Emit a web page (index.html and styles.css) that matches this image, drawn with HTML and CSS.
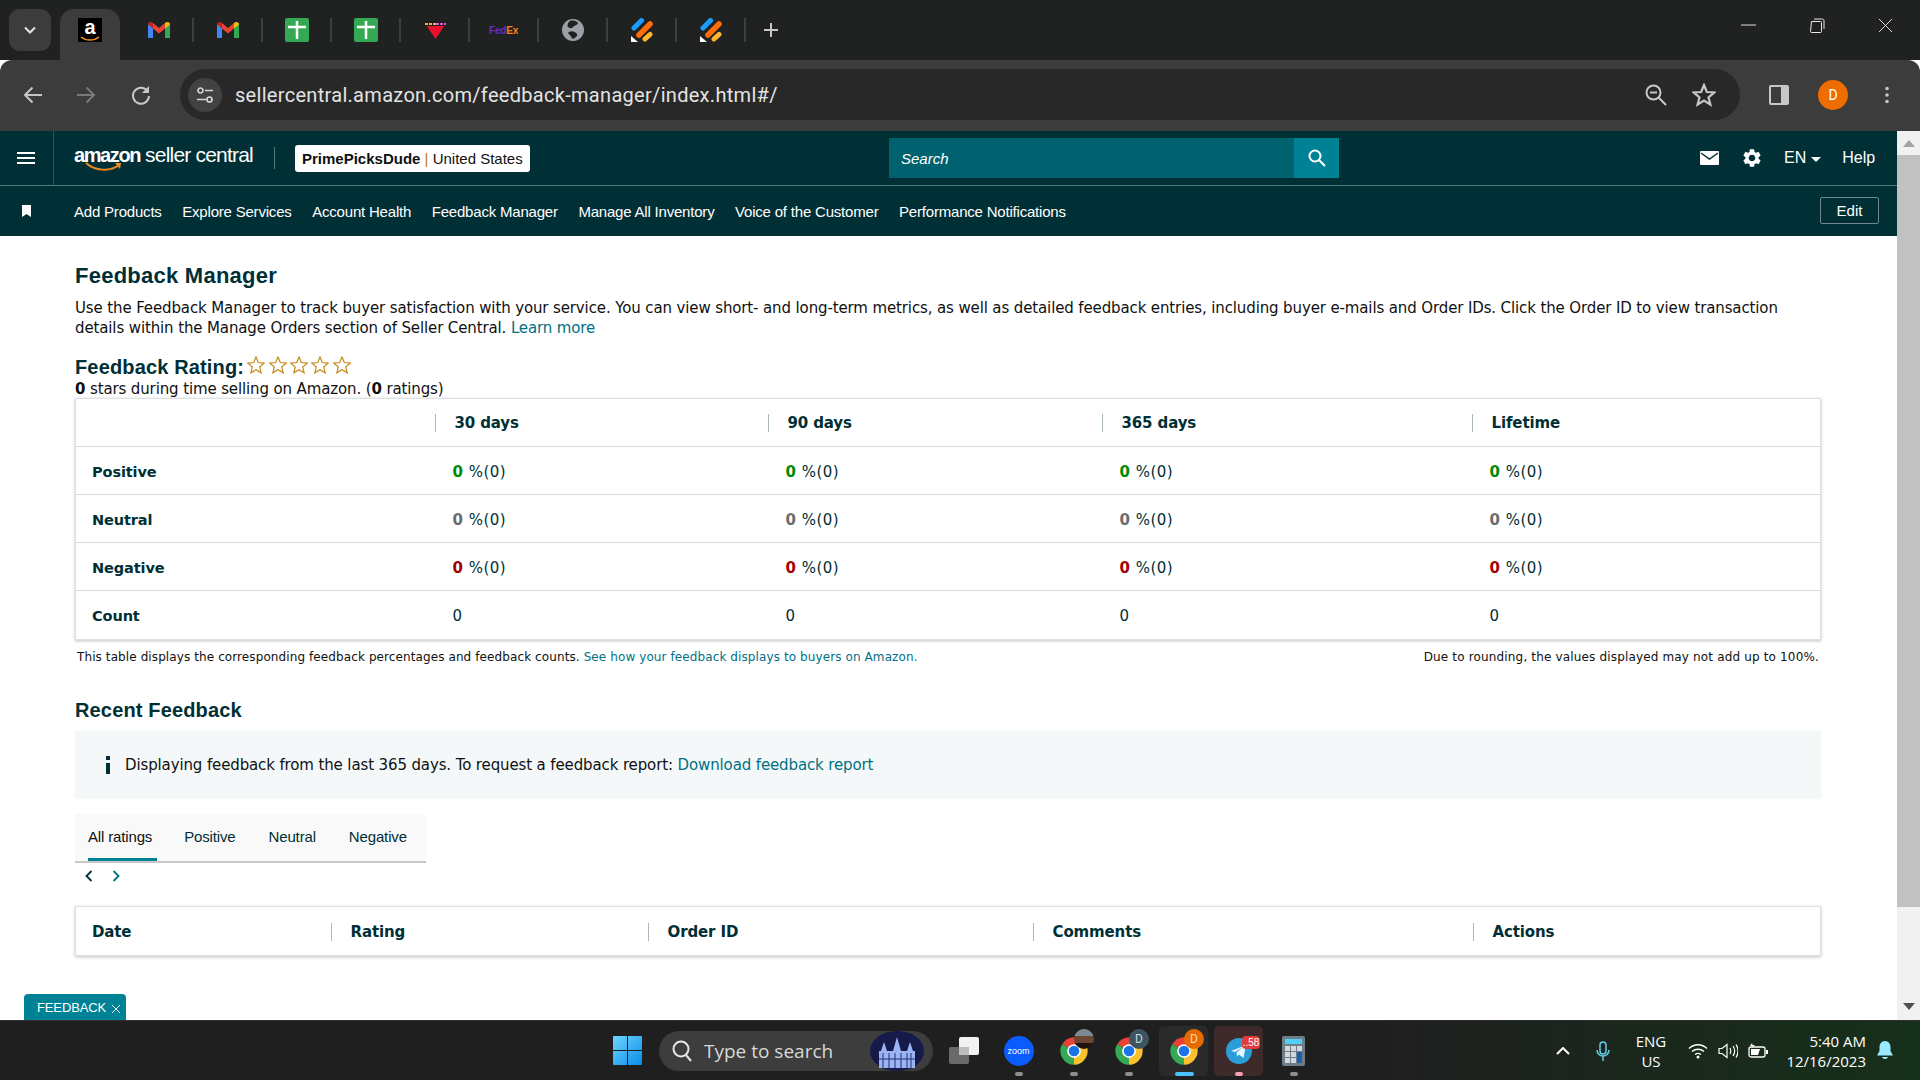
FILE: index.html
```html
<!DOCTYPE html>
<html lang="en">
<head>
    <meta charset="UTF-8">
    <title>Feedback Manager</title>
    <link rel="stylesheet" href="styles.css">
</head>
<body>
<svg class="defs" width="0" height="0">
    <symbol id="gmail" viewBox="0 0 22 16">
        <path fill="#4285f4" d="M0 2v14h5V5z"/>
        <path fill="#34a853" d="M17 5v11h5V2z"/>
        <path fill="#ea4335" d="M5 1l6 5 6-5v5.500l-6 5-6-5z"/>
        <path fill="#c5221f" d="M0 2.500C0 0 3-.800 5 1v5.500L0 2.500z"/>
        <path fill="#fbbc04" d="M22 2.500C22 0 19-.800 17 1v5.500l5-4z"/>
    </symbol>
    <symbol id="sheet" viewBox="0 0 24 24">
        <rect width="24" height="24" rx="2" fill="#34a853"/>
        <path stroke="#fff" stroke-width="2.500" d="M3 9h18M12 3v18"/>
    </symbol>
    <symbol id="bars" viewBox="0 0 22 24">
        <path stroke-linecap="round" stroke-width="5" stroke="#1a9cff" d="M3 10l7.500-7.500"/>
        <path stroke-linecap="round" stroke-width="5.500" stroke="#ff6d0a" d="M8 17L19 6"/>
        <path stroke-linecap="round" stroke-width="5" stroke="#ffb52e" d="M14 21l5-4.500"/>
        <path fill="#fff" d="M0 18l7 6H0z"/>
    </symbol>
    <symbol id="chrome" viewBox="0 0 48 48">
        <path fill="#ea4335" d="M24 24L5 13a22 22 0 0 1 38 0z"/>
        <path fill="#fbc02d" d="M24 24l19-11a22 22 0 0 1-19 33z"/>
        <path fill="#34a853" d="M24 24v22A22 22 0 0 1 5 13z"/>
        <circle cx="24" cy="24" r="11" fill="#fff"/>
        <circle cx="24" cy="24" r="8.500" fill="#1a73e8"/>
    </symbol>
    <symbol id="star" viewBox="0 0 18 18">
        <polygon fill="none" stroke="#c68a1c" stroke-width="1.200" points="9,1 11.300,6.500 17.200,7.100 12.700,11 14.100,16.800 9,13.700 3.900,16.800 5.300,11 .8,7.100 6.700,6.500"/>
    </symbol>
</svg>

<div class="window">
    <div class="tabstrip">
        <div class="tab-search"><svg class="ico-12" viewBox="0 0 12 12"><path fill="none" stroke="#e3e3e3" stroke-width="2" d="M1 3.500l5 5 5-5"/></svg></div>
        <div class="tab-active">
            <div class="fav-amazon">
                <span>a</span>
                <svg viewBox="0 0 24 6"><path fill="none" stroke="#f08a1d" stroke-width="1.600" d="M3 1c5 4 13 4 18 0"/></svg>
            </div>
        </div>
        <div class="tab"><svg class="fav-gmail"><use href="#gmail"/></svg></div>
        <div class="tab"><svg class="fav-gmail"><use href="#gmail"/></svg></div>
        <div class="tab"><svg class="fav"><use href="#sheet"/></svg></div>
        <div class="tab"><svg class="fav"><use href="#sheet"/></svg></div>
        <div class="tab">
            <svg class="fav" viewBox="0 0 24 24">
                <path fill="#e8112d" d="M3 7h19l-9.500 14z"/>
                <path fill="#1d1d1d" d="M2 3h20l1 5H1z"/>
                <path stroke="#e7b93c" stroke-width="2" stroke-dasharray="3 1" d="M2 6h11"/>
                <path stroke="#d35fd0" stroke-width="2" stroke-dasharray="3 1" d="M13 6h10"/>
            </svg>
        </div>
        <div class="tab"><div class="fav-fedex"><b>Fed</b><i>Ex</i></div></div>
        <div class="tab">
            <svg class="fav" viewBox="0 0 24 24">
                <circle cx="12" cy="12" r="11" fill="#9aa0a6"/>
                <path fill="#202221" d="M9 3c3-1 7 0 8 2-1 3-4 2-5 4s-4 1-5 0 0-5 2-6zM8 14c3-2 7 0 8 2s-2 4-4 5c-2-1-2-3-3-4s-3-2-1-3z"/>
            </svg>
        </div>
        <div class="tab"><svg class="fav"><use href="#bars"/></svg></div>
        <div class="tab"><svg class="fav"><use href="#bars"/></svg></div>
        <svg class="new-tab" viewBox="0 0 16 16"><path stroke="#c7c7c7" stroke-width="2" d="M8 1v14M1 8h14"/></svg>
        <div class="win-controls">
            <svg class="win-min" viewBox="0 0 16 2"><path stroke="#e8e8e8" d="M0 1h16"/></svg>
            <svg class="win-max" viewBox="0 0 16 16"><path fill="none" stroke="#e8e8e8" d="M2.500 4.500h9a1 1 0 0 1 1 1v9a1 1 0 0 1-1 1h-9a1 1 0 0 1-1-1z M5 2h7.500A2 2 0 0 1 15 4v8"/></svg>
            <svg class="win-close" viewBox="0 0 16 16"><path stroke="#e8e8e8" d="M1 1l14 14M15 1L1 15"/></svg>
        </div>
    </div>

    <div class="toolbar">
        <svg class="tb-back" viewBox="0 0 20 18"><path fill="none" stroke="#c7c7c7" stroke-width="2" d="M19 9H2M9.500 1.500L2 9l7.500 7.500"/></svg>
        <svg class="tb-forward" viewBox="0 0 20 18"><path fill="none" stroke="#7a7a7a" stroke-width="2" d="M1 9h17M10.500 1.500L18 9l-7.500 7.500"/></svg>
        <svg class="tb-reload" viewBox="0 0 20 20"><path fill="none" stroke="#c7c7c7" stroke-width="2" d="M16.500 6A8 8 0 1 0 18 11"/><path fill="#c7c7c7" d="M18 1v7h-7z"/></svg>
        <div class="omnibox">
            <div class="site-info">
                <svg class="ico-18" viewBox="0 0 18 18"><g fill="none" stroke="#d5d5d5" stroke-width="1.700"><circle cx="4.500" cy="4.500" r="2.500"/><circle cx="13.500" cy="13.500" r="2.500"/><path d="M9 4.500h8M1 13.500h9"/></g></svg>
            </div>
            <span class="url">sellercentral.amazon.com/feedback-manager/index.html#/</span>
            <svg class="omni-zoom" viewBox="0 0 22 22"><g fill="none" stroke="#c7c7c7" stroke-width="2"><circle cx="8.500" cy="8.500" r="7"/><path d="M13.500 13.500L21 21M5 8.500h7"/></g></svg>
            <svg class="omni-star" viewBox="0 0 24 24"><polygon fill="none" stroke="#c7c7c7" stroke-width="2.200" points="12,2 14.800,9 22.300,9.500 16.500,14.300 18.400,21.600 12,17.600 5.600,21.600 7.500,14.300 1.700,9.500 9.200,9"/></svg>
        </div>
        <svg class="tb-panel" viewBox="0 0 22 22"><rect x="1" y="1" width="20" height="20" rx="2" fill="#c7c7c7"/><rect x="3" y="3" width="10" height="16" fill="#3c3c3c"/></svg>
        <div class="profile">D</div>
        <svg class="tb-menu" viewBox="0 0 4 18"><g fill="#c7c7c7"><circle cx="2" cy="2.500" r="1.800"/><circle cx="2" cy="9" r="1.800"/><circle cx="2" cy="15.500" r="1.800"/></g></svg>
    </div>

    <div class="viewport">
        <div class="page">
            <header>
                <div class="topbar">
                    <div class="burger"><span></span><span></span><span></span></div>
                    <div class="logo">
                        <div class="logo-text"><b>amazon</b> seller central</div>
                        <svg class="logo-smile" viewBox="0 0 36 10"><path fill="none" stroke="#f08a1d" stroke-width="2" d="M1 1c9 8 24 9 33 2"/><path fill="#f08a1d" d="M30 1l6 0-1 6z"/></svg>
                    </div>
                    <div class="account"><b>PrimePicksDude</b> <em>|</em> United States</div>
                    <div class="search">
                        <span class="search-text">Search</span>
                        <div class="search-btn"><svg class="ico-18" viewBox="0 0 18 18"><g fill="none" stroke="#fff" stroke-width="2"><circle cx="7" cy="7" r="5.500"/><path d="M11 11l6 6"/></g></svg></div>
                    </div>
                    <div class="top-links">
                        <svg class="ico-mail" viewBox="0 0 19 14"><rect width="19" height="14" rx="1" fill="#fff"/><path fill="none" stroke="#002f36" stroke-width="1.500" d="M1 2l8.500 6L18 2"/></svg>
                        <svg class="ico-gear" viewBox="0 0 24 24"><path fill="#fff" d="M19.140 12.940c.04-.3.06-.61.06-.94 0-.32-.02-.64-.07-.94l2.030-1.580a.49.49 0 0 0 .12-.61l-1.920-3.320a.488.488 0 0 0-.59-.22l-2.390.96c-.5-.38-1.030-.7-1.620-.94l-.36-2.540a.484.484 0 0 0-.48-.41h-3.840c-.24 0-.43.17-.47.41l-.36 2.540c-.59.24-1.130.57-1.620.94l-2.390-.96c-.22-.08-.47 0-.59.22L2.740 8.870c-.12.21-.08.47.12.61l2.030 1.580c-.05.3-.09.63-.09.94s.02.64.07.94l-2.030 1.580a.49.49 0 0 0-.12.61l1.920 3.320c.12.22.37.29.59.22l2.390-.96c.5.38 1.030.7 1.620.94l.36 2.540c.05.24.24.41.48.41h3.840c.24 0 .44-.17.47-.41l.36-2.540c.59-.24 1.130-.56 1.620-.94l2.390.96c.22.08.47 0 .59-.22l1.920-3.320c.12-.22.07-.47-.12-.61l-2.010-1.580zM12 15.600c-1.980 0-3.600-1.620-3.600-3.600s1.620-3.600 3.600-3.600 3.600 1.620 3.600 3.600-1.620 3.600-3.600 3.600z"/></svg>
                        <span class="lang">EN</span>
                        <span class="caret"></span>
                        <span class="help">Help</span>
                    </div>
                </div>
                <nav class="navbar">
                    <svg class="ico-bookmark" viewBox="0 0 9 12"><path fill="#fff" d="M0 0h9v12L4.500 9 0 12z"/></svg>
                    <ul>
                        <li>Add Products</li>
                        <li>Explore Services</li>
                        <li>Account Health</li>
                        <li>Feedback Manager</li>
                        <li>Manage All Inventory</li>
                        <li>Voice of the Customer</li>
                        <li>Performance Notifications</li>
                    </ul>
                    <button class="edit-btn">Edit</button>
                </nav>
            </header>

            <section class="content">
                <h1>Feedback Manager</h1>
                <p class="intro">Use the Feedback Manager to track buyer satisfaction with your service. You can view short- and long-term metrics, as well as detailed feedback entries, including buyer e-mails and Order IDs. Click the Order ID to view transaction details within the Manage Orders section of Seller Central. <a href="#">Learn more</a></p>

                <div class="rating-row">
                    <h2>Feedback Rating:</h2>
                    <div class="stars">
                        <svg><use href="#star"/></svg><svg><use href="#star"/></svg><svg><use href="#star"/></svg><svg><use href="#star"/></svg><svg><use href="#star"/></svg>
                    </div>
                </div>
                <p class="rating-note"><b>0</b> stars during time selling on Amazon. (<b>0</b> ratings)</p>

                <table class="grid">
                    <colgroup><col class="c-name"><col class="c-30"><col class="c-90"><col class="c-365"><col></colgroup>
                    <tr>
                        <th></th>
                        <th><span>30 days</span></th>
                        <th><span>90 days</span></th>
                        <th><span>365 days</span></th>
                        <th><span>Lifetime</span></th>
                    </tr>
                    <tr>
                        <td class="row-name">Positive</td>
                        <td><b class="pos">0</b> %(0)</td>
                        <td><b class="pos">0</b> %(0)</td>
                        <td><b class="pos">0</b> %(0)</td>
                        <td><b class="pos">0</b> %(0)</td>
                    </tr>
                    <tr>
                        <td class="row-name">Neutral</td>
                        <td><b class="neu">0</b> %(0)</td>
                        <td><b class="neu">0</b> %(0)</td>
                        <td><b class="neu">0</b> %(0)</td>
                        <td><b class="neu">0</b> %(0)</td>
                    </tr>
                    <tr>
                        <td class="row-name">Negative</td>
                        <td><b class="neg">0</b> %(0)</td>
                        <td><b class="neg">0</b> %(0)</td>
                        <td><b class="neg">0</b> %(0)</td>
                        <td><b class="neg">0</b> %(0)</td>
                    </tr>
                    <tr class="row-last">
                        <td class="row-name">Count</td>
                        <td>0</td>
                        <td>0</td>
                        <td>0</td>
                        <td>0</td>
                    </tr>
                </table>
                <div class="footnote">
                    <span>This table displays the corresponding feedback percentages and feedback counts. <a href="#">See how your feedback displays to buyers on Amazon.</a></span>
                    <span class="footnote-right">Due to rounding, the values displayed may not add up to 100%.</span>
                </div>

                <h2 class="recent-title">Recent Feedback</h2>
                <div class="info-box">
                    <span class="info-i"></span>
                    <span>Displaying feedback from the last 365 days. To request a feedback report: <a href="#">Download feedback report</a></span>
                </div>

                <div class="filter-tabs">
                    <div class="filter active">All ratings</div>
                    <div class="filter">Positive</div>
                    <div class="filter">Neutral</div>
                    <div class="filter">Negative</div>
                </div>
                <div class="pager">
                    <svg viewBox="0 0 8 12"><path fill="none" stroke="#002f36" stroke-width="1.800" d="M6.500 1L1.500 6l5 5"/></svg>
                    <svg viewBox="0 0 8 12"><path fill="none" stroke="#007185" stroke-width="1.800" d="M1.500 1l5 5-5 5"/></svg>
                </div>

                <table class="grid grid-recent">
                    <colgroup><col class="c-date"><col class="c-rating"><col class="c-order"><col class="c-comments"><col></colgroup>
                    <tr>
                        <th class="first">Date</th>
                        <th><span>Rating</span></th>
                        <th><span>Order ID</span></th>
                        <th><span>Comments</span></th>
                        <th><span>Actions</span></th>
                    </tr>
                </table>
            </section>

            <div class="feedback-tab">FEEDBACK <svg viewBox="0 0 10 10"><path stroke="#fff" d="M1 1l8 8M9 1L1 9"/></svg></div>
        </div>
        <div class="scrollbar">
            <div class="sb-up"></div>
            <div class="sb-thumb"></div>
            <div class="sb-down"></div>
        </div>
    </div>

    <div class="taskbar">
        <svg class="win-logo" viewBox="0 0 29 29">
            <defs><linearGradient id="winblue" x1="0" y1="0" x2="1" y2="1"><stop offset="0" stop-color="#6fd6ff"/><stop offset="1" stop-color="#0a8be6"/></linearGradient></defs>
            <path fill="url(#winblue)" d="M0 1a1 1 0 0 1 1-1h13v14H0zM15 0h13a1 1 0 0 1 1 1v13H15zM0 15h14v14H1a1 1 0 0 1-1-1zM15 15h14v13a1 1 0 0 1-1 1H15z"/>
        </svg>
        <div class="task-search">
            <svg class="ico-20" viewBox="0 0 20 22"><g fill="none" stroke="#e6e6e6" stroke-width="2"><circle cx="9" cy="9" r="7.500"/><path d="M14 15l5 6"/></g></svg>
            <span>Type to search</span>
            <svg class="search-art" viewBox="0 0 56 40">
                <ellipse cx="28" cy="20" rx="27" ry="20" fill="#141a4a"/>
                <g fill="#9db4f2"><path d="M10 37V20h36v17zM24 20l4-14 4 14zM12 20l3-9 3 9zM38 20l3-9 3 9z"/></g>
                <g stroke="#20307e"><path d="M14 22v15M20 22v15M26 22v15M32 22v15M38 22v15M42 22v15M10 28h36"/></g>
            </svg>
        </div>
        <div class="apps">
            <div class="app dotless">
                <svg class="ico-taskview" viewBox="0 0 30 27"><rect y="10" width="20" height="17" rx="2" fill="#6a6a6a"/><rect x="10" width="20" height="18" rx="2" fill="#f2f2f2"/><rect x="10" y="10" width="10" height="8" fill="#bdbdbd"/></svg>
            </div>
            <div class="app">
                <div class="zoom-app">zoom</div>
                <span class="dot"></span>
            </div>
            <div class="app">
                <svg class="ico-chrome"><use href="#chrome"/></svg>
                <span class="ava ava-photo"></span>
                <span class="dot"></span>
            </div>
            <div class="app">
                <svg class="ico-chrome"><use href="#chrome"/></svg>
                <span class="ava ava-slate">D</span>
                <span class="dot"></span>
            </div>
            <div class="app app-active">
                <svg class="ico-chrome"><use href="#chrome"/></svg>
                <span class="ava ava-orange">D</span>
                <span class="dot dot-blue"></span>
            </div>
            <div class="app app-alert">
                <svg class="ico-tg" viewBox="0 0 26 26"><circle cx="13" cy="13" r="13" fill="#2a9ed8"/><path fill="#e9f6fc" d="M5 13l15-6-2.500 13-4.500-3.500-2 2-.5-4 6-5.500-7.500 5z"/></svg>
                <span class="tg-badge">..58</span>
                <span class="dot dot-pink"></span>
            </div>
            <div class="app">
                <svg class="ico-calc" viewBox="0 0 23 30">
                    <rect width="23" height="30" rx="2" fill="#6f7d88"/>
                    <rect x="3" y="3" width="17" height="5" fill="#4fd0f5"/>
                    <g fill="#d3d8dc"><rect x="3" y="10" width="5" height="5"/><rect x="9" y="10" width="5" height="5"/><rect x="15" y="10" width="5" height="5"/><rect x="3" y="16" width="5" height="5"/><rect x="9" y="16" width="5" height="5"/><rect x="3" y="22" width="5" height="5"/><rect x="9" y="22" width="5" height="5"/></g>
                    <rect x="15" y="16" width="5" height="11" fill="#1d5fa8"/>
                </svg>
                <span class="dot"></span>
            </div>
        </div>
        <div class="tray">
            <svg class="tray-chev" viewBox="0 0 14 8"><path fill="none" stroke="#fff" stroke-width="2" d="M1 7l6-6 6 6"/></svg>
            <svg class="tray-mic" viewBox="0 0 14 20"><g fill="none" stroke="#62d0ea" stroke-width="1.500"><rect x="4" y="1" width="6" height="12" rx="3"/><path d="M1 9a6 6 0 0 0 12 0M7 15v5"/></g></svg>
            <div class="tray-lang">ENG<br>US</div>
            <svg class="tray-ico" viewBox="0 0 20 16"><g fill="none" stroke="#fff" stroke-width="1.300"><path d="M1 5.500c5-5 13-5 18 0M4 8.500c3.500-3 8.500-3 12 0M7 11.500c2-1.500 4-1.500 6 0"/></g><circle cx="10" cy="14" r="1.500" fill="#fff"/></svg>
            <svg class="tray-ico" viewBox="0 0 20 16"><g fill="none" stroke="#fff" stroke-width="1.200"><path d="M1 5.500h3L9 1.500v13L4 10.500H1z"/><path d="M12 5c1 2 1 4 0 6M15 3c2 3 2 7 0 10M18 1.500c2.500 4 2.500 9 0 13"/></g></svg>
            <svg class="tray-ico" viewBox="0 0 20 16"><rect x="1" y="4" width="16" height="10" rx="2" fill="none" stroke="#fff" stroke-width="1.300"/><path fill="#fff" d="M3 6h9l-2 6H3zM18 7h2v4h-2zM4 0l-2 3h3L3 6l4-4H4.500z"/></svg>
            <div class="clock">5:40 AM<br>12/16/2023</div>
            <svg class="tray-bell" viewBox="0 0 16 20"><path fill="#99ecff" d="M8 0c3.500 0 5.500 3 5.500 6v4l2.500 4.500H0L2.500 10V6C2.500 3 4.500 0 8 0zM5 16h6c-.5 2.500-5.500 2.500-6 0z"/></svg>
        </div>
    </div>
</div>
</body>
</html>
```
FILE: styles.css
```css
* {
    box-sizing: border-box;
}
body {
    margin: 0;
    font-family: "DejaVu Sans", sans-serif;
    font-size: 15px;
    letter-spacing: -.125px;
    color: #0f1111;
    background: #fff;
}
.defs {
    display: block;
    height: 0;
}
a {
    color: #007185;
    text-decoration: none;
}
.window {
    width: 1920px;
    height: 1080px;
    display: flex;
    flex-direction: column;
    overflow: hidden;
}
.ico-12 { width: 12px; height: 12px; }
.ico-18 { width: 18px; height: 18px; }
.ico-20 { width: 20px; height: 22px; flex: none; }

/* browser tabs */
.tabstrip {
    height: 60px;
    background: #202221;
    display: flex;
    align-items: flex-end;
    flex: none;
}
.tab-search {
    width: 42px;
    height: 42px;
    margin: 0 9px 9px;
    border-radius: 11px;
    background: #3c3c3c;
    display: flex;
    align-items: center;
    justify-content: center;
}
.tab-active {
    width: 60px;
    height: 51px;
    margin-right: 5px;
    border-radius: 14px 14px 0 0;
    background: #3c3c3c;
    display: flex;
    justify-content: center;
    padding-top: 9px;
}
.fav-amazon {
    width: 24px;
    height: 24px;
    background: #000;
    color: #fff;
    font: bold 20px/18px "Liberation Sans", sans-serif;
    letter-spacing: 0;
    text-align: center;
}
.fav-amazon span {
    display: block;
    height: 18px;
}
.fav-amazon svg {
    display: block;
    width: 24px;
    height: 6px;
}
.tab {
    width: 69px;
    height: 24px;
    margin-bottom: 18px;
    border-right: 2px solid #3e3f3f;
    display: flex;
    align-items: center;
    justify-content: center;
}
.fav { width: 24px; height: 24px; }
.fav-gmail { width: 22px; height: 16px; }
.fav-fedex {
    font: bold 10px "Liberation Sans", sans-serif;
    letter-spacing: -.2px;
}
.fav-fedex b { color: #6a2cc0; }
.fav-fedex i { color: #f5821f; font-style: normal; }
.new-tab {
    width: 16px;
    height: 16px;
    margin: 0 0 22px 17px;
}
.win-controls {
    margin-left: auto;
    height: 60px;
    display: flex;
    align-items: center;
    padding: 0 27px 10px 0;
}
.win-min { width: 15px; height: 2px; }
.win-max { width: 16px; height: 16px; margin-left: 53px; }
.win-close { width: 15px; height: 15px; margin-left: 53px; }

/* browser toolbar */
.toolbar {
    height: 71px;
    flex: none;
    background: #3c3c3c;
    border-radius: 12px 12px 0 0;
    display: flex;
    align-items: center;
    padding-bottom: 2px;
    position: relative;
}
.tb-back { width: 20px; height: 18px; margin-left: 23px; flex: none; }
.tb-forward { width: 20px; height: 18px; margin-left: 33px; flex: none; }
.tb-reload { width: 20px; height: 20px; margin-left: 35px; flex: none; }
.omnibox {
    width: 1560px;
    height: 51px;
    margin-left: 29px;
    border-radius: 26px;
    background: #282828;
    display: flex;
    align-items: center;
    padding-left: 8px;
    flex: none;
}
.site-info {
    width: 34px;
    height: 34px;
    border-radius: 50%;
    background: #424242;
    display: flex;
    align-items: center;
    justify-content: center;
    flex: none;
}
.url {
    margin-left: 13px;
    font: 20px Roboto, sans-serif;
    letter-spacing: .3px;
    color: #e3e3e3;
}
.omni-zoom { width: 22px; height: 22px; margin-left: auto; }
.omni-star { width: 24px; height: 24px; margin: 0 24px 0 25px; }
.tb-panel { width: 22px; height: 22px; margin-left: 28px; flex: none; }
.profile {
    width: 30px;
    height: 30px;
    margin-left: 28px;
    border-radius: 50%;
    background: #ef6c00;
    color: #fff;
    font: 14px/30px Roboto, sans-serif;
    text-align: center;
    flex: none;
}
.tb-menu { width: 4px; height: 18px; margin-left: 37px; flex: none; }

/* page + scrollbar */
.viewport {
    height: 889px;
    flex: none;
    display: flex;
}
.page {
    flex: 1;
    position: relative;
    overflow: hidden;
}
.scrollbar {
    width: 23px;
    background: #f1f1f1;
    display: flex;
    flex-direction: column;
    align-items: center;
}
.sb-up, .sb-down {
    width: 0;
    height: 0;
    border-left: 6px solid transparent;
    border-right: 6px solid transparent;
}
.sb-up {
    border-bottom: 7px solid #a3a3a3;
    margin: 9px 0 8px;
}
.sb-down {
    border-top: 7px solid #505050;
    margin-top: 96px;
}
.sb-thumb {
    width: 100%;
    height: 752px;
    background: #c1c1c1;
}

/* seller central header */
header {
    background: #002f36;
    color: #fff;
    font-family: "Liberation Sans", sans-serif;
    letter-spacing: 0;
}
.topbar {
    height: 55px;
    border-bottom: 1px solid #54777c;
    display: flex;
    align-items: center;
}
.burger {
    width: 54px;
    height: 54px;
    border-right: 1px solid #2f5257;
    display: flex;
    flex-direction: column;
    justify-content: center;
    gap: 3px;
    padding-left: 17px;
    flex: none;
}
.burger span {
    display: block;
    width: 18px;
    height: 2px;
    background: #fff;
}
.logo {
    margin-left: 20px;
    width: 200px;
    height: 36px;
    position: relative;
    flex: none;
}
.logo-text {
    margin-top: 2px;
    font-size: 21px;
    line-height: 26px;
    letter-spacing: -.8px;
    white-space: nowrap;
}
.logo-text b {
    font-size: 20px;
    letter-spacing: -1.400px;
}
.logo-smile {
    position: absolute;
    left: 11px;
    top: 22px;
    width: 36px;
    height: 10px;
}
.account {
    margin-left: 21px;
    padding-left: 7px;
    width: 235px;
    height: 27px;
    background: #fff;
    border-radius: 3px;
    color: #0f1111;
    font-size: 15px;
    line-height: 27px;
    white-space: nowrap;
    flex: none;
    position: relative;
}
.account::before {
    content: "";
    position: absolute;
    left: -21px;
    top: 2px;
    width: 1px;
    height: 22px;
    background: #54777c;
}
.account em {
    font-style: normal;
    color: #c9780a;
}
.search {
    margin-left: 359px;
    width: 450px;
    height: 40px;
    background: #00616f;
    display: flex;
    align-items: center;
    flex: none;
}
.search-text {
    flex: 1;
    padding-left: 12px;
    font-size: 15px;
    font-style: italic;
}
.search-btn {
    width: 45px;
    height: 40px;
    background: #008296;
    display: flex;
    align-items: center;
    justify-content: center;
}
.top-links {
    display: flex;
    align-items: center;
    margin-left: 361px;
}
.ico-mail { width: 19px; height: 14px; }
.ico-gear { width: 22px; height: 22px; margin-left: 22px; }
.lang { margin-left: 21px; font-size: 16px; }
.caret {
    margin-left: 5px;
    margin-top: 2px;
    border-left: 5px solid transparent;
    border-right: 5px solid transparent;
    border-top: 5px solid #fff;
}
.help { margin-left: 21px; font-size: 16px; }
.navbar {
    height: 50px;
    display: flex;
    align-items: center;
}
.ico-bookmark {
    width: 9px;
    height: 12px;
    margin: 0 0 1px 22px;
    flex: none;
}
.navbar ul {
    list-style: none;
    margin: 1px 0 0 43px;
    padding: 0;
    display: flex;
    gap: 20.600px;
    font-size: 15px;
    letter-spacing: -.2px;
}
.edit-btn {
    margin: 0 18px 2px auto;
    width: 59px;
    height: 27px;
    background: transparent;
    border: 1px solid #6c8a8e;
    border-radius: 2px;
    color: #fff;
    font: 15px "Liberation Sans", sans-serif;
}

/* feedback content */
.content {
    padding: 26px 76px 0 75px;
}
h1 {
    margin: 0;
    font: bold 22px/28px "Liberation Sans", sans-serif;
    letter-spacing: .25px;
    color: #002f36;
}
.intro {
    margin: 8px 0 0;
    line-height: 20px;
}
.rating-row {
    margin-top: 17px;
    height: 24px;
    display: flex;
    align-items: center;
}
h2 {
    margin: 0;
    font: bold 20px/24px "Liberation Sans", sans-serif;
    letter-spacing: .15px;
    color: #002f36;
}
.stars {
    display: flex;
    margin: 0 0 4px 3px;
    gap: 3.400px;
}
.stars svg {
    width: 18px;
    height: 18px;
}
.rating-note {
    margin: 1px 0 0;
    line-height: 18px;
}
.grid {
    width: 100%;
    table-layout: fixed;
    border-collapse: collapse;
    border: 1px solid #dde1e1;
    box-shadow: 0 1px 3px rgba(0, 0, 0, .25);
    color: #002f36;
}
.c-name { width: 359px; }
.c-30 { width: 333px; }
.c-90 { width: 334px; }
.c-365 { width: 370px; }
.grid th {
    height: 48px;
    padding: 1px 0 0;
    text-align: left;
    font-size: 15px;
    font-weight: bold;
}
.grid th span {
    display: block;
    height: 18px;
    line-height: 18px;
    border-left: 1px solid #aab7b8;
    padding-left: 19px;
}
.grid td {
    height: 48px;
    padding: 2px 0 0 18px;
    border-top: 1px solid #d5dbdb;
    letter-spacing: .5px;
}
.grid .row-last td {
    height: 49px;
}
.grid .row-name {
    font-size: 14.500px;
    font-weight: bold;
    padding-left: 16px;
    letter-spacing: -.1px;
}
.pos { color: #008a00; }
.neu { color: #6c6c6c; }
.neg { color: #a10000; }
.footnote {
    margin-top: 9px;
    padding: 0 2px;
    display: flex;
    justify-content: space-between;
    font-size: 12px;
    letter-spacing: .1px;
    line-height: 16px;
}
.footnote-right {
    letter-spacing: .16px;
}
.recent-title {
    margin-top: 32px;
    line-height: 26px;
}
.info-box {
    margin-top: 8px;
    height: 68px;
    background: #f5f8f9;
    display: flex;
    align-items: center;
    padding-left: 31px;
}
.info-i {
    width: 4px;
    height: 18px;
    margin-right: 15px;
    background: linear-gradient(#002f36 0 4px, transparent 4px 7px, #002f36 7px);
    flex: none;
}
.filter-tabs {
    margin-top: 15px;
    width: 351px;
    height: 49px;
    background: #f9f9f9;
    border-bottom: 2px solid #c9c9c9;
    display: flex;
    padding-left: 13px;
    font: 15px "Liberation Sans", sans-serif;
    letter-spacing: -.15px;
    color: #002f36;
}
.filter {
    height: 47px;
    padding-top: 14px;
    margin-right: 33px;
    white-space: nowrap;
}
.filter.active {
    padding-right: 5px;
    margin-right: 27px;
    border-bottom: 3px solid #008296;
    color: #0f1111;
}
.pager {
    height: 25px;
    display: flex;
    align-items: center;
    padding-left: 10px;
    gap: 19px;
}
.pager svg {
    width: 8px;
    height: 12px;
}
.grid-recent {
    margin-top: 18px;
    height: 50px;
}
.c-date { width: 255px; }
.c-rating { width: 317px; }
.c-order { width: 385px; }
.c-comments { width: 440px; }
.grid-recent .first {
    padding-left: 16px;
}
.feedback-tab {
    position: absolute;
    left: 24px;
    bottom: 0;
    width: 102px;
    height: 26px;
    background: #008296;
    border-radius: 4px 4px 0 0;
    color: #fff;
    font: 13px/27px "Liberation Sans", sans-serif;
    padding-left: 13px;
    white-space: nowrap;
}
.feedback-tab svg {
    width: 10px;
    height: 10px;
    margin-left: 1px;
    vertical-align: -2px;
}

/* windows taskbar */
.taskbar {
    height: 60px;
    flex: none;
    background: linear-gradient(90deg, #1f1f1f 0, #1f1f1f 72%, #16301a 100%);
    border-top: 1px solid #2e2e2e;
    display: flex;
    align-items: center;
    padding-left: 613px;
    color: #fff;
    letter-spacing: 0;
}
.win-logo { width: 29px; height: 29px; flex: none; }
.task-search {
    margin-left: 17px;
    width: 274px;
    height: 40px;
    border-radius: 20px;
    background: #3d3d3d;
    display: flex;
    align-items: center;
    padding-left: 13px;
    font: 19px "Open Sans", sans-serif;
    color: #d8d8d8;
    flex: none;
}
.task-search span {
    margin-left: 12px;
    white-space: nowrap;
}
.search-art {
    width: 56px;
    height: 40px;
    margin-left: auto;
    margin-right: 8px;
}
.apps {
    display: flex;
    margin-left: 3px;
}
.app {
    width: 55px;
    height: 50px;
    display: flex;
    align-items: center;
    justify-content: center;
    position: relative;
}
.app-active {
    background: #2a2a2a;
    border-radius: 5px;
    margin: 0 3px;
    width: 49px;
}
.app-alert {
    background: #3e2a2a;
    border-radius: 5px;
    margin: 0 3px;
    width: 49px;
}
.dot {
    position: absolute;
    left: 50%;
    bottom: 0;
    width: 8px;
    height: 4px;
    margin-left: -4px;
    border-radius: 2px;
    background: #8e8e8e;
}
.dot-blue {
    width: 19px;
    margin-left: -9px;
    background: #4cc2ff;
}
.dot-pink {
    background: #f7a0ac;
}
.ico-taskview { width: 30px; height: 27px; }
.zoom-app {
    width: 30px;
    height: 30px;
    border-radius: 50%;
    background: #0b5cff;
    color: #fff;
    font: 9px/30px "Liberation Sans", sans-serif;
    text-align: center;
}
.ico-chrome { width: 30px; height: 30px; }
.ava {
    position: absolute;
    top: 3px;
    left: 28px;
    width: 20px;
    height: 20px;
    border-radius: 50%;
    color: #c8d4da;
    font: 12px/20px Roboto, sans-serif;
    text-align: center;
}
.app-active .ava {
    left: 25px;
}
.ava-photo { background: linear-gradient(#7f8a90 0 35%, #6b4630 35% 70%, #1e1410 70%); }
.ava-slate { background: #3d5560; }
.ava-orange { background: #e66a00; color: #fbd7b0; }
.ico-tg { width: 26px; height: 26px; }
.tg-badge {
    position: absolute;
    top: 10px;
    right: 3px;
    width: 18px;
    height: 13px;
    border-radius: 4px;
    background: #e33b3b;
    color: #fff;
    font: 10px/13px "Liberation Sans", sans-serif;
    text-align: center;
}
.ico-calc { width: 23px; height: 30px; }
.tray {
    margin-left: auto;
    padding-right: 27px;
    display: flex;
    align-items: center;
}
.tray-chev { width: 14px; height: 8px; }
.tray-mic { width: 14px; height: 20px; margin-left: 26px; }
.tray-lang {
    width: 32px;
    margin: 0 21px 0 25px;
    font: 15px/20px "Open Sans", sans-serif;
    text-align: center;
}
.tray-ico { width: 20px; height: 16px; margin-right: 10px; }
.clock {
    width: 84px;
    margin-left: 4px;
    font: 15px/20px "Open Sans", sans-serif;
    text-align: right;
}
.tray-bell { width: 16px; height: 20px; margin-left: 11px; }
```
